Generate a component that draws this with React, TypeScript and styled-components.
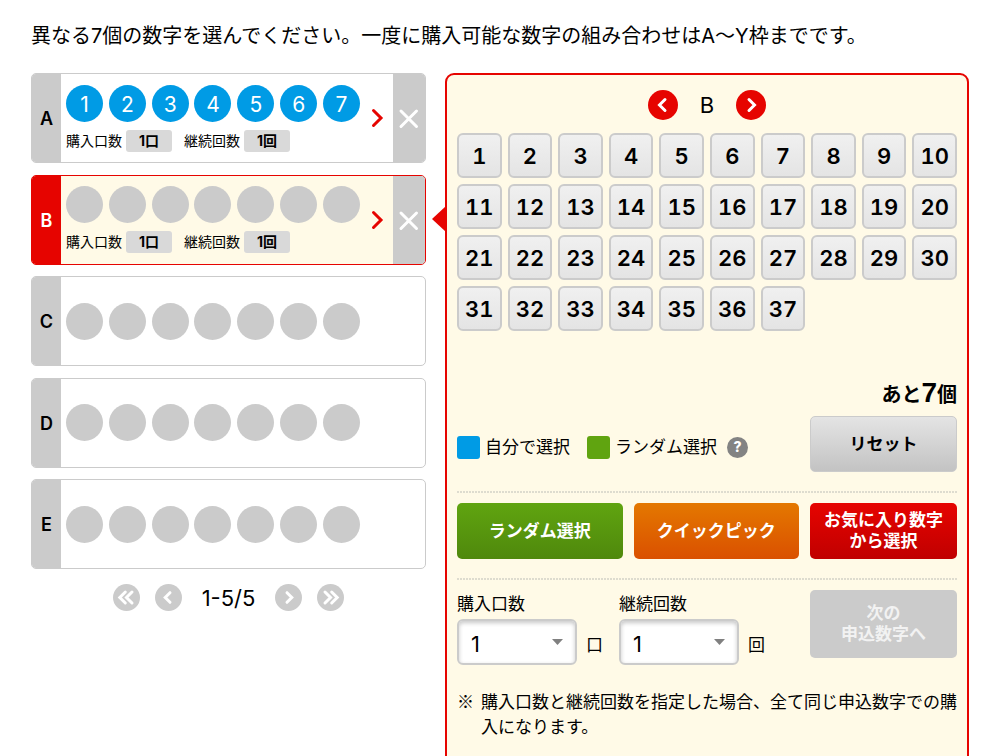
import React, { useState } from "react";
import styled, { createGlobalStyle } from "styled-components";

const RED = "#e60400";
const GREY = "#cbcbcb";
const CREAM = "#fffae7";

const GlobalStyle = createGlobalStyle`
  *, *::before, *::after { box-sizing: border-box; }
  body {
    margin: 0;
    background: #fff;
    color: #000;
    font-family: Inter, "Noto Sans CJK JP", sans-serif;
    font-size: 17px;
    line-height: 1;
  }
  button, select { font: inherit; color: inherit; }
  button { border: 0; padding: 0; background: none; cursor: pointer; }
  ul { list-style: none; margin: 0; padding: 0; }
`;

const Page = styled.main`
  padding: 21px 31px 32px;
`;

const Lead = styled.p`
  margin: 0 0 22px;
  font-size: 20px;
  line-height: 30px;
  white-space: nowrap;
`;

const Columns = styled.div`
  display: grid;
  grid-template-columns: 395fr 524fr;
  gap: 19px;
  align-items: start;
`;

const TicketList = styled.ul`
  display: grid;
  grid-template-rows: repeat(5, 90px);
  align-content: space-between;
  min-height: 496px;
`;

const Ticket = styled.li<{ $active?: boolean }>`
  display: flex;
  overflow: hidden;
  border: 1px solid ${(p) => (p.$active ? RED : GREY)};
  border-radius: 5px;
  background: ${(p) => (p.$active ? CREAM : "#fff")};
`;

const TicketLabel = styled.div<{ $active?: boolean }>`
  flex: 0 0 29px;
  display: grid;
  place-items: center;
  padding-top: 2px;
  background: ${(p) => (p.$active ? RED : GREY)};
  color: ${(p) => (p.$active ? "#fff" : "#000")};
  font-size: 18px;
  font-weight: 600;
`;

const TicketBody = styled.div`
  flex: 1;
  display: flex;
  flex-direction: column;
  justify-content: center;
  gap: 8px;
  padding-left: 5px;
`;

const Balls = styled.ul`
  display: flex;
  justify-content: space-between;
`;

const Ball = styled.li<{ $picked?: boolean }>`
  display: grid;
  place-items: center;
  width: 37px;
  height: 37px;
  padding-top: 2px;
  border-radius: 50%;
  background: ${(p) => (p.$picked ? "#009be5" : GREY)};
  color: #fff;
  font-size: 21px;
`;

const Summary = styled.div`
  display: flex;
  align-items: center;
  font-size: 14px;
  line-height: 22px;
`;

const Amount = styled.strong`
  width: 46px;
  margin: 0 12px 0 4px;
  border-radius: 3px;
  background: #d9d9d9;
  text-align: center;
`;

const OpenButton = styled.button`
  flex: 0 0 33px;
  display: grid;
  place-items: center;
  color: ${RED};
`;

const RemoveButton = styled.button`
  flex: 0 0 32px;
  display: grid;
  place-items: center;
  background: ${GREY};
  color: #fff;
`;

const Blank = styled.div`
  flex: 0 0 65px;
`;

const Pager = styled.nav`
  display: flex;
  justify-content: center;
  align-items: center;
  gap: 15px;
  margin-top: 15px;
`;

const RoundButton = styled.button<{ $main?: boolean }>`
  display: grid;
  place-items: center;
  width: ${(p) => (p.$main ? 30 : 27)}px;
  height: ${(p) => (p.$main ? 30 : 27)}px;
  border-radius: 50%;
  background: ${(p) => (p.$main ? RED : GREY)};
  color: #fff;
`;

const PageCount = styled.span`
  min-width: 63px;
  font-size: 22px;
  text-align: center;
  white-space: nowrap;
`;

const Panel = styled.section`
  position: relative;
  padding: 15px 10px 48px;
  border: 2px solid ${RED};
  border-radius: 9px;
  background: ${CREAM};
`;

const Pointer = styled.svg`
  position: absolute;
  left: -15px;
  top: 131px;
`;

const PanelHead = styled.div`
  display: grid;
  grid-template-columns: 30px 58px 30px;
  justify-content: center;
  align-items: center;
  margin-bottom: 13px;
`;

const PanelTitle = styled.h2`
  margin: 0;
  font-size: 22px;
  font-weight: 400;
  text-align: center;
`;

const NumberGrid = styled.div`
  display: grid;
  grid-template-columns: repeat(10, 1fr);
  gap: 6px;
`;

const NumberButton = styled.button`
  height: 45px;
  border: 2px solid ${GREY};
  border-radius: 6px;
  background: linear-gradient(#f0f0f0, #e4e4e4);
  font-size: 22px;
  font-weight: 600;
  font-variant-numeric: tabular-nums;
`;

const Remaining = styled.p`
  margin: 47px 0 6px;
  font-size: 20px;
  font-weight: 700;
  line-height: 30px;
  text-align: right;
`;

const RemainingCount = styled.span`
  font-family: "Liberation Sans", sans-serif;
  font-size: 28px;
`;

const Split = styled.div`
  display: grid;
  grid-template-columns: 1fr 147px;
  gap: 11px;
`;

const Legend = styled.div`
  display: flex;
  align-items: center;
  gap: 17px;
  padding-top: 6px;
`;

const LegendItem = styled.span`
  display: flex;
  align-items: center;
  gap: 5px;
  line-height: 24px;
`;

const Swatch = styled.span<{ $color: string }>`
  width: 23px;
  height: 23px;
  border-radius: 3px;
  background: ${(p) => p.$color};
`;

const HelpButton = styled.button`
  width: 21px;
  height: 21px;
  margin-left: -7px;
  border-radius: 50%;
  background: #838383;
  color: #fff;
  font-size: 14px;
  font-weight: 800;
`;

const tones = {
  grey: "linear-gradient(#e4e4e4, #c3c3c3)",
  green: "linear-gradient(#60a410, #4f880c)",
  orange: "linear-gradient(#e47800, #da5000)",
  red: "linear-gradient(#e60400, #c00000)",
};

const ActionButton = styled.button<{ $tone: keyof typeof tones }>`
  height: 56px;
  border: ${(p) => (p.$tone === "grey" ? `1px solid ${GREY}` : "0")};
  border-radius: 5px;
  background: ${(p) => tones[p.$tone]};
  color: ${(p) => (p.$tone === "grey" ? "#000" : "#fff")};
  font-weight: 700;
  line-height: 21px;
`;

const Rule = styled.hr`
  height: 2px;
  margin: 19px 0 10px;
  border: 0;
  background: repeating-linear-gradient(90deg, #dedccf 0 2px, transparent 2px 3px);
`;

const Actions = styled.div`
  display: grid;
  grid-template-columns: 1fr 1fr 147px;
  gap: 11px;
`;

const Fields = styled.div`
  display: flex;
  padding-top: 3px;
`;

const Field = styled.div`
  flex: 0 0 162px;
`;

const FieldLabel = styled.label`
  display: block;
  margin-bottom: 4px;
  line-height: 22px;
`;

const FieldRow = styled.div`
  display: flex;
  align-items: center;
  gap: 9px;
`;

const SelectWrap = styled.div`
  position: relative;
  width: 120px;
`;

const Select = styled.select`
  appearance: none;
  width: 100%;
  height: 46px;
  padding: 4px 12px 0;
  border: 2px solid ${GREY};
  border-radius: 6px;
  background: #fff;
  box-shadow: inset 0 2px 4px rgba(0, 0, 0, 0.22);
  font-size: 22px;
`;

const Caret = styled.svg`
  position: absolute;
  right: 14px;
  top: 20px;
  pointer-events: none;
`;

const Unit = styled.span`
  padding-top: 7px;
`;

const NextButton = styled.button`
  height: 68px;
  border-radius: 5px;
  background: ${GREY};
  color: #f2f2f2;
  font-weight: 700;
  line-height: 21px;
`;

const Note = styled.p`
  display: flex;
  align-items: baseline;
  gap: 7px;
  margin: 23px 0 0;
  line-height: 25px;
`;

const NoteMark = styled.span`
  flex: 0 0 17px;
  font-family: "Noto Sans CJK JP", sans-serif;
`;

const Chevron = ({ d, size, stroke }: { d: string; size: number; stroke: number }) => (
  <svg
    width={size}
    height={size}
    viewBox={`0 0 ${size} ${size}`}
    fill="none"
    stroke="currentColor"
    strokeWidth={stroke}
    strokeLinecap="round"
    aria-hidden="true"
  >
    <path d={d} />
  </svg>
);

const icons = {
  left: "M17 9.5 11.5 15l5.5 5.5",
  right: "M13 9.5l5.5 5.5-5.5 5.5",
  smallLeft: "M15 8.7 10.2 13.5l4.8 4.8",
  smallRight: "M12 8.7l4.8 4.8-4.8 4.8",
  first: "M12.3 8 6.8 13.5l5.5 5.5M19 8l-5.5 5.5L19 19",
  last: "M8 8l5.5 5.5L8 19M14.7 8l5.5 5.5-5.5 5.5",
};

const tickets = [
  { id: "A", numbers: [1, 2, 3, 4, 5, 6, 7], open: true },
  { id: "B", numbers: [], open: true },
  { id: "C", numbers: [], open: false },
  { id: "D", numbers: [], open: false },
  { id: "E", numbers: [], open: false },
];

const slots = [0, 1, 2, 3, 4, 5, 6];
const choices = Array.from({ length: 37 }, (_, i) => i + 1);

function TicketRow({ id, numbers, open, active }: { id: string; numbers: number[]; open: boolean; active: boolean }) {
  return (
    <Ticket $active={active}>
      <TicketLabel $active={active}>{id}</TicketLabel>
      <TicketBody>
        <Balls>
          {slots.map((i) => (
            <Ball key={i} $picked={numbers[i] !== undefined}>{numbers[i]}</Ball>
          ))}
        </Balls>
        {open && (
          <Summary>
            購入口数<Amount>1口</Amount>継続回数<Amount>1回</Amount>
          </Summary>
        )}
      </TicketBody>
      {open ? (
        <>
          <OpenButton type="button" aria-label={`${id}を編集`}>
            <Chevron size={24} stroke={3} d="M8.5 4.5l7.5 7.5-7.5 7.5" />
          </OpenButton>
          <RemoveButton type="button" aria-label={`${id}を削除`}>
            <Chevron size={24} stroke={3} d="M4 5l15.5 15.5M19.5 5L4 20.5" />
          </RemoveButton>
        </>
      ) : (
        <Blank />
      )}
    </Ticket>
  );
}

function CountField({ id, label, unit }: { id: string; label: string; unit: string }) {
  const [value, setValue] = useState("1");
  return (
    <Field>
      <FieldLabel htmlFor={id}>{label}</FieldLabel>
      <FieldRow>
        <SelectWrap>
          <Select id={id} value={value} onChange={(e) => setValue(e.target.value)}>
            {["1", "2", "3", "4", "5"].map((n) => (
              <option key={n}>{n}</option>
            ))}
          </Select>
          <Caret width="11" height="6" viewBox="0 0 11 6" aria-hidden="true">
            <path d="M0 0h11L5.5 6z" fill="#808080" />
          </Caret>
        </SelectWrap>
        <Unit>{unit}</Unit>
      </FieldRow>
    </Field>
  );
}

export default function App() {
  return (
    <>
      <GlobalStyle />
      <Page lang="ja">
        <Lead>異なる7個の数字を選んでください。一度に購入可能な数字の組み合わせはA〜Y枠までです。</Lead>
        <Columns>
          <div>
            <TicketList>
              {tickets.map((t) => (
                <TicketRow key={t.id} {...t} active={t.id === "B"} />
              ))}
            </TicketList>
            <Pager aria-label="ページ">
              <RoundButton type="button" aria-label="最初"><Chevron size={27} stroke={3} d={icons.first} /></RoundButton>
              <RoundButton type="button" aria-label="前"><Chevron size={27} stroke={3} d={icons.smallLeft} /></RoundButton>
              <PageCount>1-5/5</PageCount>
              <RoundButton type="button" aria-label="次"><Chevron size={27} stroke={3} d={icons.smallRight} /></RoundButton>
              <RoundButton type="button" aria-label="最後"><Chevron size={27} stroke={3} d={icons.last} /></RoundButton>
            </Pager>
          </div>

          <Panel>
            <Pointer width="14" height="26" viewBox="0 0 14 26" aria-hidden="true">
              <path d="M14 0v26L0 13z" fill={RED} />
            </Pointer>
            <PanelHead>
              <RoundButton $main type="button" aria-label="前の枠"><Chevron size={30} stroke={3} d={icons.left} /></RoundButton>
              <PanelTitle>B</PanelTitle>
              <RoundButton $main type="button" aria-label="次の枠"><Chevron size={30} stroke={3} d={icons.right} /></RoundButton>
            </PanelHead>

            <NumberGrid>
              {choices.map((n) => (
                <NumberButton key={n} type="button">{n}</NumberButton>
              ))}
            </NumberGrid>

            <Remaining>あと<RemainingCount>7</RemainingCount>個</Remaining>

            <Split>
              <Legend>
                <LegendItem><Swatch $color="#009be5" />自分で選択</LegendItem>
                <LegendItem><Swatch $color="#60a410" />ランダム選択</LegendItem>
                <HelpButton type="button" aria-label="ヘルプ">?</HelpButton>
              </Legend>
              <ActionButton type="button" $tone="grey">リセット</ActionButton>
            </Split>

            <Rule />

            <Actions>
              <ActionButton type="button" $tone="green">ランダム選択</ActionButton>
              <ActionButton type="button" $tone="orange">クイックピック</ActionButton>
              <ActionButton type="button" $tone="red">お気に入り数字<br />から選択</ActionButton>
            </Actions>

            <Rule />

            <Split>
              <Fields>
                <CountField id="units" label="購入口数" unit="口" />
                <CountField id="repeats" label="継続回数" unit="回" />
              </Fields>
              <NextButton type="button" disabled>次の<br />申込数字へ</NextButton>
            </Split>

            <Note>
              <NoteMark>※</NoteMark>
              <span>購入口数と継続回数を指定した場合、全て同じ申込数字での購入になります。</span>
            </Note>
          </Panel>
        </Columns>
      </Page>
    </>
  );
}
